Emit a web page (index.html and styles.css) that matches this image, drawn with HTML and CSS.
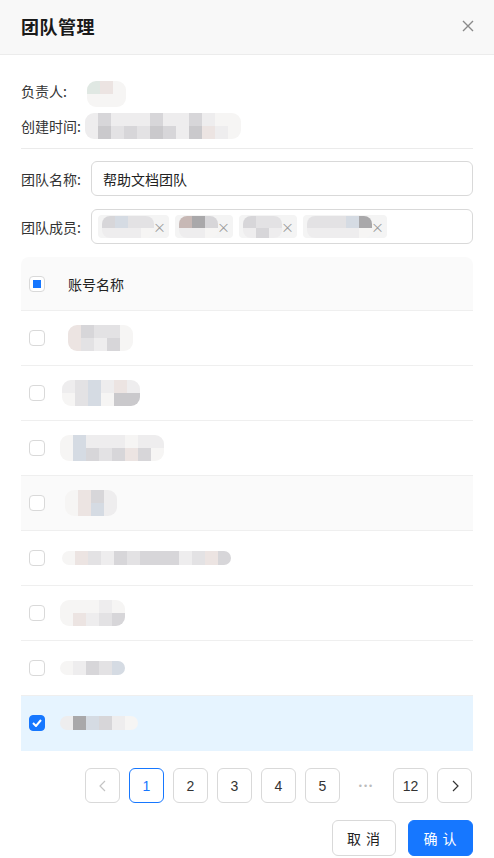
FILE: index.html
```html
<!DOCTYPE html>
<html lang="zh-CN">
<head>
<meta charset="utf-8">
<title>团队管理</title>
<link rel="stylesheet" href="styles.css">
</head>
<body>
<div class="dialog">
  <div class="header">
    <div class="title">团队管理</div>
    <svg class="close" width="12" height="12" viewBox="0 0 12 12"><path d="M1 1L11 11M11 1L1 11" stroke="#8a8a8a" stroke-width="1.4" fill="none"/></svg>
  </div>
  <div class="body">
    <div class="info">
      <div class="info-row"><span class="info-label">负责人:</span>
        <span class="mosaic m-owner"><i class="a"></i><i class="w"></i><i class="p"></i><i class="w"></i><i class="w"></i><i class="w"></i></span>
      </div>
      <div class="info-row"><span class="info-label">创建时间:</span>
        <span class="mosaic m-time"><i class="l"></i><i class="l"></i><i class="b"></i><i class="d"></i><i class="l"></i><i class="c"></i><i class="l"></i><i class="b"></i><i class="l"></i><i class="c"></i><i class="b"></i><i class="d"></i><i class="l"></i><i class="b"></i><i class="l"></i><i class="l"></i><i class="b"></i><i class="d"></i><i class="l"></i><i class="p"></i><i class="w"></i><i class="l"></i><i class="w"></i><i class="w"></i></span>
      </div>
    </div>
    <div class="form">
      <div class="form-row">
        <label class="form-label">团队名称:</label>
        <div class="input">帮助文档团队</div>
      </div>
      <div class="form-row">
        <label class="form-label">团队成员:</label>
        <div class="input tags">
          <span class="tag"><span class="mosaic m-tag"><i class="b"></i><i class="l"></i><i class="sb"></i><i class="l"></i><i class="c"></i><i class="l"></i><i class="c"></i><i class="w"></i></span><span class="tag-x">×</span></span>
          <span class="tag"><span class="mosaic m-tag"><i class="p2"></i><i class="l"></i><i class="e"></i><i class="l"></i><i class="b"></i><i class="w"></i></span><span class="tag-x">×</span></span>
          <span class="tag"><span class="mosaic m-tag"><i class="b"></i><i class="l"></i><i class="c"></i><i class="b"></i><i class="c"></i><i class="l"></i></span><span class="tag-x">×</span></span>
          <span class="tag"><span class="mosaic m-tag"><i class="c"></i><i class="l"></i><i class="c"></i><i class="l"></i><i class="c"></i><i class="l"></i><i class="sb"></i><i class="l"></i><i class="e"></i><i class="w"></i></span><span class="tag-x">×</span></span>
        </div>
      </div>
    </div>
    <div class="table">
      <div class="tr thead">
        <span class="cb cb-half"></span>
        <span class="th">账号名称</span>
      </div>
      <div class="tr">
        <span class="cb"></span>
        <span class="mosaic m-r1"><i class="p"></i><i class="p"></i><i class="b"></i><i class="c"></i><i class="c"></i><i class="l"></i><i class="c"></i><i class="b"></i><i class="w"></i><i class="w"></i></span>
      </div>
      <div class="tr">
        <span class="cb"></span>
        <span class="mosaic m-r2"><i class="l"></i><i class="w"></i><i class="c"></i><i class="c"></i><i class="sb"></i><i class="sb"></i><i class="l"></i><i class="w"></i><i class="p"></i><i class="d"></i><i class="l"></i><i class="d"></i></span>
      </div>
      <div class="tr">
        <span class="cb"></span>
        <span class="mosaic m-r3"><i class="w"></i><i class="w"></i><i class="sb"></i><i class="sb"></i><i class="l"></i><i class="b"></i><i class="l"></i><i class="c"></i><i class="l"></i><i class="b"></i><i class="w"></i><i class="p"></i><i class="l"></i><i class="b"></i><i class="l"></i><i class="w"></i></span>
      </div>
      <div class="tr hover">
        <span class="cb"></span>
        <span class="mosaic m-r4"><i class="w"></i><i class="w"></i><i class="p"></i><i class="p"></i><i class="b"></i><i class="sb"></i><i class="l"></i><i class="l"></i></span>
      </div>
      <div class="tr">
        <span class="cb"></span>
        <span class="mosaic m-r5 single"><i class="w"></i><i class="p"></i><i class="c"></i><i class="l"></i><i class="b"></i><i class="c"></i><i class="b"></i><i class="b"></i><i class="b"></i><i class="l"></i><i class="c"></i><i class="p"></i><i class="b"></i></span>
      </div>
      <div class="tr">
        <span class="cb"></span>
        <span class="mosaic m-r6"><i class="w"></i><i class="w"></i><i class="w"></i><i class="p"></i><i class="w"></i><i class="l"></i><i class="l"></i><i class="c"></i><i class="w"></i><i class="b"></i></span>
      </div>
      <div class="tr">
        <span class="cb"></span>
        <span class="mosaic m-r7 single"><i class="w"></i><i class="l"></i><i class="b"></i><i class="c"></i><i class="sb"></i></span>
      </div>
      <div class="tr selected">
        <span class="cb cb-on"><svg width="10" height="8" viewBox="0 0 10 8"><path d="M1 4L4 7L9 1" stroke="#fff" stroke-width="2" fill="none"/></svg></span>
        <span class="mosaic m-r8 single"><i class="l"></i><i class="e"></i><i class="sb"></i><i class="b"></i><i class="l"></i><i class="w"></i></span>
      </div>
    </div>
    <div class="pager">
      <span class="pg disabled"><svg width="8" height="12" viewBox="0 0 8 12"><path d="M6 1L1 6L6 11" stroke="#c4c4c4" stroke-width="1.2" fill="none"/></svg></span>
      <span class="pg active">1</span>
      <span class="pg">2</span>
      <span class="pg">3</span>
      <span class="pg">4</span>
      <span class="pg">5</span>
      <span class="pg ellipsis">•••</span>
      <span class="pg">12</span>
      <span class="pg"><svg width="8" height="12" viewBox="0 0 8 12"><path d="M2 1L7 6L2 11" stroke="#333" stroke-width="1.2" fill="none"/></svg></span>
    </div>
    <div class="footer">
      <button class="btn">取 消</button>
      <button class="btn primary">确 认</button>
    </div>
  </div>
</div>
</body>
</html>
```
FILE: styles.css
```css
* { box-sizing: border-box; }
html, body { margin: 0; padding: 0; background: #fff; }
body {
  font-family: "Noto Sans CJK SC", "Noto Sans", "Liberation Sans", sans-serif;
  font-size: 14px;
  color: #333;
  width: 494px;
  height: 858px;
  overflow: hidden;
}
.header {
  height: 55px;
  background: #f8f8f8;
  border-bottom: 1px solid #ececec;
  display: flex;
  align-items: center;
  justify-content: space-between;
  padding: 0 20px 2px 21px;
}
.title { font-size: 18px; font-weight: 700; color: #1a1a1a; letter-spacing: 0.5px; }
.close { display: block; }
.body { padding: 0 21px; }
.info { padding-top: 18px; padding-bottom: 5px; border-bottom: 1px solid #ebebeb; }
.info-row { height: 35px; display: flex; align-items: center; }
.info-label { width: 66px; flex: none; }
.mosaic {
  display: grid;
  grid-template-rows: repeat(2, 13px);
  grid-auto-flow: column;
  grid-auto-columns: 13px;
  border-radius: 9px;
  overflow: hidden;
}
.mosaic.single { grid-template-rows: 14px; }
.mosaic i { display: block; }
.mosaic .w { background: #f6f5f4; }
.mosaic .l { background: #eeedee; }
.mosaic .c { background: #e3e2e4; }
.mosaic .b { background: #d7d6d9; }
.mosaic .d { background: #cac9cc; }
.mosaic .e { background: #a9a8aa; }
.mosaic .sb { background: #d5dbe3; }
.mosaic .a { background: #e0e8e3; }
.mosaic .p { background: #ece4e2; }
.mosaic .p2 { background: #c7b8b5; }
.m-owner { margin-top: 6px; }
.m-time { margin-left: -2px; }
.form { padding-top: 12px; display: flex; flex-direction: column; gap: 13px; }
.form-row { display: flex; align-items: center; }
.form-label { width: 70px; flex: none; }
.input {
  flex: 1;
  height: 35px;
  border: 1px solid #d9d9d9;
  border-radius: 6px;
  padding: 0 11px;
  display: flex;
  align-items: center;
  color: #222;
}
.tags { padding: 0 6px; gap: 6px; }
.tag {
  height: 23px;
  background: #f4f4f4;
  border-radius: 4px;
  display: flex;
  align-items: center;
  padding: 0 3px 0 4px;
}
.m-tag { grid-template-rows: 12px 10px; grid-auto-columns: 13px; border-radius: 8px; }
.tag-x { color: #999; font-size: 13px; line-height: 1; margin-left: -1px; }
.table { margin-top: 13px; }
.tr {
  display: flex;
  align-items: center;
  height: 55px;
  border-bottom: 1px solid #efefef;
  padding-left: 8px;
}
.thead { background: #fafafa; border-radius: 8px 8px 0 0; height: 54px; }
.th { color: #222; }
.hover { background: #fafafa; }
.selected { background: #e6f4ff; border-bottom-color: #e6f4ff; }
.cb {
  width: 16px; height: 16px;
  border: 1px solid #d9d9d9;
  border-radius: 4px;
  background: #fff;
  flex: none;
  display: flex; align-items: center; justify-content: center;
  margin-right: 23px;
}
.cb-half::after { content: ""; width: 8px; height: 8px; background: #1677ff; }
.cb-on { background: #1677ff; border-color: #1677ff; }
.cb-on svg { display: block; }
.m-r1 { margin-left: 0; }
.m-r2 { margin-left: -6px; }
.m-r3 { margin-left: -8px; }
.m-r4 { margin-left: -3px; }
.m-r5 { margin-left: -6px; }
.m-r6 { margin-left: -8px; }
.m-r7 { margin-left: -8px; }
.m-r8 { margin-left: -8px; }
.pager {
  margin-top: 17px;
  display: flex;
  justify-content: flex-end;
  gap: 9px;
  padding-right: 1px;
}
.pg {
  width: 35px; height: 35px;
  border: 1px solid #d9d9d9;
  border-radius: 6px;
  display: flex; align-items: center; justify-content: center;
  font-family: "Liberation Sans", "Noto Sans", sans-serif;
  font-size: 14px;
  color: #333;
}
.pg.active { border-color: #1677ff; color: #1677ff; }
.pg.ellipsis { border: none; color: #bbb; font-size: 9px; letter-spacing: 2px; }
.footer {
  margin-top: 17px;
  display: flex;
  justify-content: flex-end;
  gap: 12px;
}
.btn {
  height: 36px;
  width: 64px;
  border: 1px solid #d9d9d9;
  border-radius: 6px;
  background: #fff;
  font-family: inherit;
  font-size: 14px;
  color: #222;
  padding: 0;
  letter-spacing: 1px;
}
.btn.primary { width: 65px; background: #1677ff; border-color: #1677ff; color: #fff; }
```
